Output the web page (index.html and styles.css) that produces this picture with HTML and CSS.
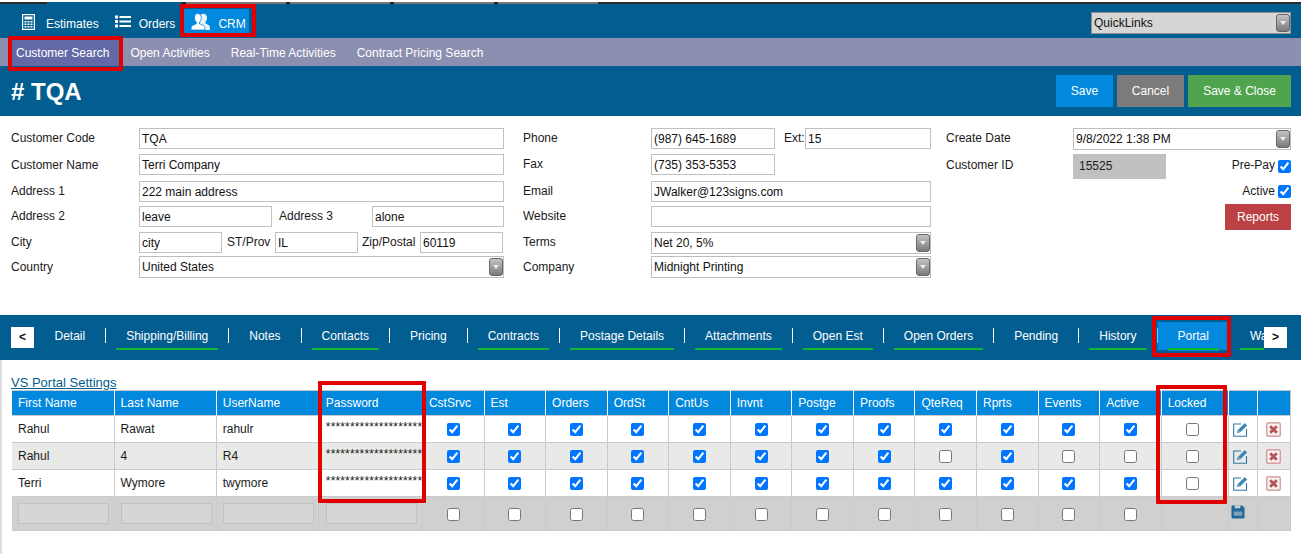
FILE: index.html
```html
<!DOCTYPE html>
<html lang="en">
<head>
<meta charset="utf-8">
<title>Customer TQA</title>
<link rel="stylesheet" href="styles.css">
</head>
<body>
<svg class="defs" width="0" height="0" aria-hidden="true">
  <symbol id="i-edit" viewBox="0 0 15 15">
    <path d="M8 2H.7V14.300H13.500V7" fill="none" stroke="#3175a6" stroke-width="1.100"/>
    <path d="M4 11L4.600 8.200L11.800 1L14.200 3.400L7 10.500Z" fill="#4085b5"/>
    <path d="M4.900 8.600L6.700 10.300" stroke="#fff" stroke-width=".6"/>
  </symbol>
  <symbol id="i-del" viewBox="0 0 15 15">
    <rect x=".8" y=".8" width="13.400" height="13.400" rx="1" fill="#fbf3f3" stroke="#cd8f8f" stroke-width="1.200"/>
    <path d="M4.200 4.200L10.800 10.800M10.800 4.200L4.200 10.800" stroke="#b5555a" stroke-width="3"/>
  </symbol>
</svg>

<div class="strip">
  <span class="s1"></span><span class="s2"></span><span class="s4"></span><span class="s3"></span><span class="s4"></span><span class="s3"></span><span class="s4"></span><span class="s3"></span><span class="s4"></span><span class="s3"></span>
</div>

<header class="topbar">
  <nav class="mainnav">
    <a class="mainitem">
      <svg class="nav-icon" width="13" height="16" viewBox="0 0 13 16"><rect x=".6" y=".6" width="11.800" height="14.800" fill="none" stroke="#fff" stroke-width="1.200"/><rect x="2.500" y="2.500" width="8" height="3" fill="#fff"/><path d="M2.500 7h2v1.500h-2zM5.500 7h2v1.500h-2zM8.500 7h2v1.500h-2zM2.500 9.500h2V11h-2zM5.500 9.500h2V11h-2zM8.500 9.500h2V11h-2zM2.500 12h2v1.500h-2zM5.500 12h2v1.500h-2zM8.500 12h2v1.500h-2z" fill="#fff"/></svg>
      <span class="navtext">Estimates</span>
    </a>
    <a class="mainitem">
      <svg class="nav-icon" width="16" height="13" viewBox="0 0 16 13"><path d="M0 .5h3v3H0zM0 5h3v3H0zM0 9.500h3v3H0zM4.500 1h11.500v2H4.500zM4.500 5.500h11.500v2H4.500zM4.500 10h11.500v2H4.500z" fill="#fff"/></svg>
      <span class="navtext">Orders</span>
    </a>
    <a class="mainitem active">
      <svg class="nav-icon" width="19" height="17" viewBox="0 0 19 17"><path d="M12.500 .8c2.200 0 3.500 1.700 3.500 4 0 1.800-.7 3.300-1.600 4.200v1.500c1.400.6 3.300 1.200 4 2.300.4.700.6 2.500.6 4.200H12c0-1.500-1-3.500-3-5V2.500c.8-1 2-1.700 3.500-1.700z" fill="#e6f4fd"/><path d="M6.500 .5c2.300 0 3.800 1.800 3.800 4.300 0 2-.8 3.500-1.700 4.400v1.600c1.700.7 3.700 1.400 4.700 2.500.5.700.7 2.200.7 3.700H0c0-1.500.2-3 .7-3.700 1-1.100 3-1.800 4.600-2.500V9.200C4.400 8.300 3.500 6.800 3.500 4.800c0-2.500 .9-4.300 3-4.300z" fill="#fff" stroke="#0288dd" stroke-width=".8"/></svg>
      <span class="navtext">CRM</span>
    </a>
  </nav>
  <div class="selectbox quick">
    <select class="select-plain"><option>QuickLinks</option></select>
    <span class="arrow"></span>
  </div>
</header>

<nav class="subnav">
  <a class="subitem active">Customer Search</a>
  <a class="subitem">Open Activities</a>
  <a class="subitem">Real-Time Activities</a>
  <a class="subitem">Contract Pricing Search</a>
</nav>

<section class="titlebar">
  <h1 class="title"># TQA</h1>
  <div class="actions">
    <button class="btn btn-save">Save</button>
    <button class="btn btn-cancel">Cancel</button>
    <button class="btn btn-close">Save &amp; Close</button>
  </div>
</section>

<section class="form">
  <div class="col col-a">
    <div class="row"><label class="lbl">Customer Code</label><input class="inp grow" value="TQA"></div>
    <div class="row"><label class="lbl lbl-low">Customer Name</label><input class="inp grow" value="Terri Company"></div>
    <div class="row"><label class="lbl">Address 1</label><input class="inp grow" value="222 main address"></div>
    <div class="row"><label class="lbl">Address 2</label><input class="inp w133" value="leave"><label class="lbl-addr3">Address 3</label><input class="inp grow" value="alone"></div>
    <div class="row"><label class="lbl">City</label><input class="inp w83" value="city"><label class="lbl-st">ST/Prov</label><input class="inp w83" value="IL"><label class="lbl-zip">Zip/Postal</label><input class="inp w83" value="60119"></div>
    <div class="row"><label class="lbl lbl-low">Country</label><div class="selectbox grow tall"><select class="select-plain"><option>United States</option></select><span class="arrow"></span></div></div>
  </div>
  <div class="col col-b">
    <div class="row"><label class="lbl">Phone</label><input class="inp w124" value="(987) 645-1689"><label class="lbl-ext">Ext:</label><input class="inp grow" value="15"></div>
    <div class="row"><label class="lbl">Fax</label><input class="inp w124" value="(735) 353-5353"></div>
    <div class="row"><label class="lbl">Email</label><input class="inp grow" value="JWalker@123signs.com"></div>
    <div class="row"><label class="lbl">Website</label><input class="inp grow" value=""></div>
    <div class="row"><label class="lbl">Terms</label><div class="selectbox grow tall"><select class="select-plain"><option>Net 20, 5%</option></select><span class="arrow"></span></div></div>
    <div class="row"><label class="lbl lbl-low">Company</label><div class="selectbox grow tall"><select class="select-plain"><option>Midnight Printing</option></select><span class="arrow"></span></div></div>
  </div>
  <div class="col-c">
    <div class="row-c date"><label class="lbl lbl-c">Create Date</label><div class="selectbox grow tall white"><select class="select-plain"><option>9/8/2022 1:38 PM</option></select><span class="arrow"></span></div></div>
    <div class="row-c idrow">
      <label class="lbl lbl-c lbl-low">Customer ID</label>
      <div class="idbox">15525</div>
      <label class="check prepay"><span class="check-text">Pre-Pay</span><input type="checkbox" checked></label>
    </div>
    <div class="row-c end"><label class="check"><span class="check-text">Active</span><input type="checkbox" checked></label></div>
    <div class="row-c end"><button class="btn btn-reports">Reports</button></div>
  </div>
</section>

<nav class="tabbar">
  <button class="pager">&lt;</button>
  <div class="tabs">
    <a class="tab">Detail</a>
    <a class="tab on">Shipping/Billing</a>
    <a class="tab">Notes</a>
    <a class="tab on">Contacts</a>
    <a class="tab">Pricing</a>
    <a class="tab on">Contracts</a>
    <a class="tab on">Postage Details</a>
    <a class="tab on">Attachments</a>
    <a class="tab on">Open Est</a>
    <a class="tab on">Open Orders</a>
    <a class="tab">Pending</a>
    <a class="tab on">History</a>
    <a class="tab on current">Portal</a>
    <a class="tab on">Wa</a>
  </div>
  <button class="pager pager-next">&gt;</button>
</nav>

<main class="content">
  <a class="sectionlink">VS Portal Settings</a>
  <table class="grid">
    <colgroup>
      <col class="c-name"><col class="c-name"><col class="c-name"><col class="c-pass">
      <col class="c-chk"><col class="c-chk"><col class="c-chk"><col class="c-chk"><col class="c-chk"><col class="c-chk"><col class="c-chk"><col class="c-chk"><col class="c-chk"><col class="c-chk"><col class="c-chk"><col class="c-chk">
      <col class="c-lock"><col class="c-ed"><col class="c-del">
    </colgroup>
    <thead>
      <tr><th>First Name</th><th>Last Name</th><th>UserName</th><th>Password</th><th>CstSrvc</th><th>Est</th><th>Orders</th><th>OrdSt</th><th>CntUs</th><th>Invnt</th><th>Postge</th><th>Proofs</th><th>QteReq</th><th>Rprts</th><th>Events</th><th>Active</th><th>Locked</th><th></th><th></th></tr>
    </thead>
    <tbody>
      <tr>
        <td>Rahul</td><td>Rawat</td><td>rahulr</td><td class="pw">********************</td>
        <td class="mid"><input type="checkbox" checked></td><td class="mid"><input type="checkbox" checked></td><td class="mid"><input type="checkbox" checked></td><td class="mid"><input type="checkbox" checked></td><td class="mid"><input type="checkbox" checked></td><td class="mid"><input type="checkbox" checked></td><td class="mid"><input type="checkbox" checked></td><td class="mid"><input type="checkbox" checked></td><td class="mid"><input type="checkbox" checked></td><td class="mid"><input type="checkbox" checked></td><td class="mid"><input type="checkbox" checked></td><td class="mid"><input type="checkbox" checked></td>
        <td class="mid"><input type="checkbox"></td>
        <td class="mid"><svg class="ico"><use href="#i-edit"/></svg></td><td class="mid"><svg class="ico"><use href="#i-del"/></svg></td>
      </tr>
      <tr class="alt">
        <td>Rahul</td><td>4</td><td>R4</td><td class="pw">********************</td>
        <td class="mid"><input type="checkbox" checked></td><td class="mid"><input type="checkbox" checked></td><td class="mid"><input type="checkbox" checked></td><td class="mid"><input type="checkbox" checked></td><td class="mid"><input type="checkbox" checked></td><td class="mid"><input type="checkbox" checked></td><td class="mid"><input type="checkbox" checked></td><td class="mid"><input type="checkbox" checked></td><td class="mid"><input type="checkbox"></td><td class="mid"><input type="checkbox" checked></td><td class="mid"><input type="checkbox"></td><td class="mid"><input type="checkbox"></td>
        <td class="mid"><input type="checkbox"></td>
        <td class="mid"><svg class="ico"><use href="#i-edit"/></svg></td><td class="mid"><svg class="ico"><use href="#i-del"/></svg></td>
      </tr>
      <tr>
        <td>Terri</td><td>Wymore</td><td>twymore</td><td class="pw">********************</td>
        <td class="mid"><input type="checkbox" checked></td><td class="mid"><input type="checkbox" checked></td><td class="mid"><input type="checkbox" checked></td><td class="mid"><input type="checkbox" checked></td><td class="mid"><input type="checkbox" checked></td><td class="mid"><input type="checkbox" checked></td><td class="mid"><input type="checkbox" checked></td><td class="mid"><input type="checkbox" checked></td><td class="mid"><input type="checkbox" checked></td><td class="mid"><input type="checkbox" checked></td><td class="mid"><input type="checkbox" checked></td><td class="mid"><input type="checkbox" checked></td>
        <td class="mid"><input type="checkbox"></td>
        <td class="mid"><svg class="ico"><use href="#i-edit"/></svg></td><td class="mid"><svg class="ico"><use href="#i-del"/></svg></td>
      </tr>
      <tr class="add">
        <td><input class="addinp"></td><td><input class="addinp"></td><td><input class="addinp"></td><td class="pw-add"><input class="addinp"></td>
        <td class="mid"><input type="checkbox"></td><td class="mid"><input type="checkbox"></td><td class="mid"><input type="checkbox"></td><td class="mid"><input type="checkbox"></td><td class="mid"><input type="checkbox"></td><td class="mid"><input type="checkbox"></td><td class="mid"><input type="checkbox"></td><td class="mid"><input type="checkbox"></td><td class="mid"><input type="checkbox"></td><td class="mid"><input type="checkbox"></td><td class="mid"><input type="checkbox"></td><td class="mid"><input type="checkbox"></td>
        <td></td>
        <td class="mid"><svg class="ico-save" viewBox="0 0 15 15"><path d="M1.500 .5H12L14.500 3V13a1.500 1.500 0 0 1-1.500 1.500H2A1.500 1.500 0 0 1 .5 13V1.500A1 1 0 0 1 1.500 .5z" fill="#1f6a97"/><rect x="4" y=".5" width="6" height="3" fill="#d0d0d0"/><rect x="3" y="7" width="9" height="4.500" rx=".5" fill="#7ea3bd"/></svg></td><td></td>
      </tr>
    </tbody>
  </table>
</main>

<div class="mark mark-crm"></div>
<div class="mark mark-search"></div>
<div class="mark mark-portal"></div>
<div class="mark mark-pass"></div>
<div class="mark mark-locked"></div>
</body>
</html>
```

FILE: styles.css
```css
* { box-sizing: border-box; }
html, body { margin: 0; height: 100%; }
body { position: relative; overflow: hidden; background: #fff; color: #1a1a1a; font: 12px "Liberation Sans", Arial, sans-serif; }
.defs { position: absolute; }
a { color: inherit; text-decoration: none; }

.strip { display: flex; height: 4px; border-top: 2px solid #fff; background: #2a2a2a; }
.strip span { display: block; }
.s1 { width: 47px; background: #2a2a2a; }
.s2 { width: 135px; background: #025d90; }
.s3 { width: 100px; background: #777; }
.s4 { width: 4px; background: #222; }

.topbar { display: flex; justify-content: space-between; height: 34px; padding: 8px 10px 0 0; background: #025d90; }
.mainnav { display: flex; height: 25px; margin-top: -3px; padding-left: 22px; color: #fff; }
.mainitem { display: flex; align-items: center; gap: 11px; }
.mainitem:nth-child(2) { margin-left: 16px; gap: 8px; }
.mainitem.active { margin-left: 9px; padding-left: 7px; width: 65px; gap: 8px; background: #0288dd; }
.navtext { padding-top: 4px; }
.nav-icon { flex: none; }

.selectbox { position: relative; height: 22px; background: #fff; border: 1px solid #bdbdbd; }
.select-plain { display: block; width: 100%; height: 100%; padding: 0 2px; border: 0; border-radius: 0; background: transparent; color: #111; font: 12px "Liberation Sans", Arial, sans-serif; appearance: none; -webkit-appearance: none; outline: 0; }
.arrow { position: absolute; top: 1px; right: 0; bottom: 1px; width: 14px; border: 1px solid #666; border-radius: 3px; background: linear-gradient(#c4c4c4, #7a7a7a); }
.arrow::after { content: ""; position: absolute; left: 2.500px; top: 6px; border: 3.500px solid transparent; border-top: 4px solid #eee; border-bottom: 0; }
.quick { width: 200px; background: #d6d6d6; border-color: #8e8e8e; }

.subnav { display: flex; height: 28px; padding: 2px 0 0 8px; background: #8c8fb0; color: #fff; }
.subitem { display: flex; align-items: center; padding: 0 10.5px; }
.subitem.active { padding: 0 10px 0 8px; margin-right: .5px; background: #6369a7; }

.titlebar { display: flex; justify-content: space-between; align-items: center; height: 50px; padding: 0 10px 0 11px; background: #025d90; color: #fff; }
.title { margin: 2px 0 0; font-size: 24px; font-weight: bold; }
.actions { display: flex; gap: 4px; margin-top: -1px; }
.btn { height: 32px; padding: 0; border: 0; color: #fff; font: 12px "Liberation Sans", Arial, sans-serif; }
.btn-save { width: 57px; background: #0288dd; }
.btn-cancel { width: 67px; background: #7b7b7b; }
.btn-close { width: 103px; background: #4fa44d; }
.btn-reports { width: 66px; height: 26px; background: #bb4145; }

.form { display: flex; height: 199px; padding: 12px 0 0 11px; }
.col { display: grid; grid-template-columns: minmax(0, 1fr); grid-template-rows: 26px 27px 25px 26px 24px 22px; align-content: start; }
.col-a { flex: none; width: 493px; margin-right: 19px; }
.col-b { flex: none; width: 408px; margin-right: 15px; }
.col-c { flex: none; width: 345px; }
.row { display: flex; align-items: flex-start; }
.lbl { flex: none; width: 128px; line-height: 21px; }
.lbl-low { padding-top: 1px; }
.lbl-c { width: 127px; }
.inp { flex: none; height: 21px; padding: 0 2px; border: 1px solid #c0c0c0; border-radius: 0; background: #fff; color: #111; font: 12px "Liberation Sans", Arial, sans-serif; outline: 0; }
.grow { flex: 1 1 0; min-width: 0; }
.w133 { width: 133px; }
.w83 { width: 83px; }
.w124 { width: 124px; }
.lbl-addr3 { flex: none; width: 100px; padding-left: 7px; line-height: 20px; }
.lbl-st { flex: none; width: 53px; padding-left: 5px; line-height: 21px; }
.lbl-zip { flex: none; width: 62px; padding-left: 4px; line-height: 21px; }
.lbl-ext { flex: none; width: 30px; padding-left: 9px; line-height: 21px; }
.tall { height: 22px; }
.row-c { display: flex; align-items: flex-start; }
.date { height: 26px; }
.idrow { height: 31px; }
.idbox { width: 93px; height: 25px; padding-left: 6px; background: #c0c0c0; color: #222; line-height: 24px; }
.check { display: flex; align-items: center; gap: 3px; }
.check-text { padding-bottom: 2px; }
.check input { width: 13px; height: 13px; margin: 0; }
.prepay { margin-left: auto; margin-top: 4px; }
.end { justify-content: flex-end; height: 19px; }
.end:last-child { height: 26px; }
.end .check { height: 13px; }

.tabbar { display: flex; align-items: center; height: 45px; padding: 0 14px 0 11px; background: #025d90; }
.pager { flex: none; width: 23px; height: 21px; padding: 0 0 2px; border: 0; background: #fff; color: #111; font: bold 12px "Liberation Sans", Arial, sans-serif; }
.tabs { display: flex; flex: 1 1 0; align-self: flex-start; min-width: 0; height: 29px; margin-top: 7px; overflow: hidden; white-space: nowrap; color: #fff; }
.tab { position: relative; flex: none; height: 28px; margin: 0 10.5px; padding: 0 10px; line-height: 28px; }
.tab::after { content: ""; position: absolute; top: 6px; right: -11px; width: 1px; height: 15px; background: #fff; }
.tab.on { border-bottom: 2px solid #0cb832; }
.tab.current { background: #0288dd; box-shadow: -10.5px 0 0 #0288dd, 10.5px 0 0 #0288dd, 0 1px 0 #0288dd; }
.tab.current::after, .tab:last-child::after { display: none; }

.content { height: 194px; padding: 15px 10px 0 10px; border-left: 2px solid #dcdcdc; }
.sectionlink { display: block; margin-left: -1px; height: 15px; color: #025d90; font-size: 13px; line-height: 15px; text-decoration: underline; }
.grid { width: 1279px; border-collapse: collapse; table-layout: fixed; border: 1px solid #c6c6c6; border-left: 0; }
.c-name { width: 102px; }
.c-pass { width: 104px; }
.c-chk { width: 61.5px; }
.c-lock { width: 67px; }
.c-ed { width: 29px; }
.c-del { width: 33px; }
.grid th { height: 25px; padding: 0 0 0 6px; border-left: 1px solid #fff; background: #0288dd; color: #fff; font-weight: normal; text-align: left; overflow: hidden; white-space: nowrap; }
.grid td { height: 27px; padding: 0 0 0 6px; border: 1px solid #cbcbcb; color: #1a1a1a; overflow: hidden; white-space: nowrap; }
.grid tr > :first-child { border-left: 0; }
.grid th:nth-child(4), .grid .pw-add { padding-left: 7px; }
.grid .mid { padding: 0; text-align: center; }
.grid .pw { padding: 0 0 5px 7px; letter-spacing: .15px; }
.grid .mid input { display: block; width: 13px; height: 13px; margin: 1px auto 0; }
.grid td:nth-child(17) input { margin-left: 24px; }
.alt td { background: #e9e9e7; }
.grid .add td { height: 34px; background: #d0d0d0; }
.addinp { display: block; width: 91px; height: 21px; border: 1px solid #c2c2c2; border-radius: 0; background: #d6d6d6; }
.ico { display: block; width: 15px; height: 15px; margin: 0 auto; }
.grid td:nth-child(18) .ico { margin-left: 4px; }
.ico-save { display: block; width: 14px; height: 14px; margin: 0 0 3px 2px; }

.mark { position: absolute; border: 4px solid #e00000; border-radius: 1px; pointer-events: none; }
.mark-crm { left: 180px; top: 4px; width: 76px; height: 33px; }
.mark-search { left: 8px; top: 36px; width: 115px; height: 35px; }
.mark-portal { left: 1152px; top: 316px; width: 79px; height: 41px; }
.mark-pass { left: 318px; top: 381px; width: 108px; height: 122px; }
.mark-locked { left: 1156px; top: 385px; width: 71px; height: 119px; }
```
